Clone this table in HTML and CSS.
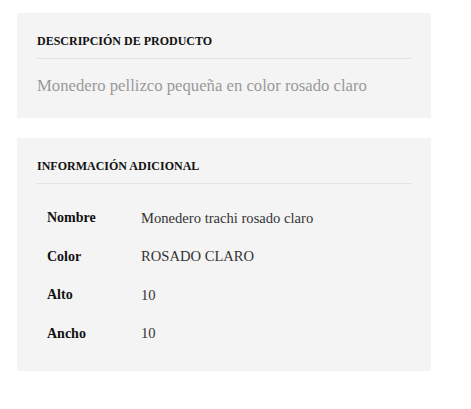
FILE: index.html
```html
<!DOCTYPE html>
<html lang="es">
<head>
<meta charset="utf-8">
<link rel="stylesheet" href="styles.css">
</head>
<body>
<div class="page">
  <section class="box">
    <h2 class="title">DESCRIPCIÓN DE PRODUCTO</h2>
    <p class="desc">Monedero pellizco pequeña en color rosado claro</p>
  </section>
  <section class="box box2">
    <h2 class="title">INFORMACIÓN ADICIONAL</h2>
    <table class="attrs">
      <tr><th>Nombre</th><td>Monedero trachi rosado claro</td></tr>
      <tr><th>Color</th><td>ROSADO CLARO</td></tr>
      <tr><th>Alto</th><td>10</td></tr>
      <tr><th>Ancho</th><td>10</td></tr>
    </table>
  </section>
</div>
</body>
</html>
```
FILE: styles.css
```css
html, body { margin: 0; padding: 0; background: #fff; }
body { font-family: "Liberation Serif", serif; color: #222; }
.page { padding: 13px 40px 0 17px; display: flex; flex-direction: column; gap: 20px; }
.box { background: #f4f4f4; padding: 20px 20px 0 20px; }
.title {
  margin: 0;
  font-size: 12px;
  font-weight: bold;
  color: #111;
  line-height: 16px;
  padding: 0 0 9px;
  border-bottom: 1px solid #e2e2e2;
}
.desc {
  margin: 0;
  padding: 16px 0 21px;
  line-height: 22px;
  color: #999;
  font-size: 16.7px;
}
.attrs { border-collapse: collapse; margin: 15px 0 18px 10px; }
.attrs th, .attrs td { text-align: left; padding: 0; height: 38.5px; font-size: 14px; vertical-align: middle; }
.attrs th { width: 94px; font-weight: bold; color: #111; }
.attrs td { color: #333; font-size: 14.6px; }
```
